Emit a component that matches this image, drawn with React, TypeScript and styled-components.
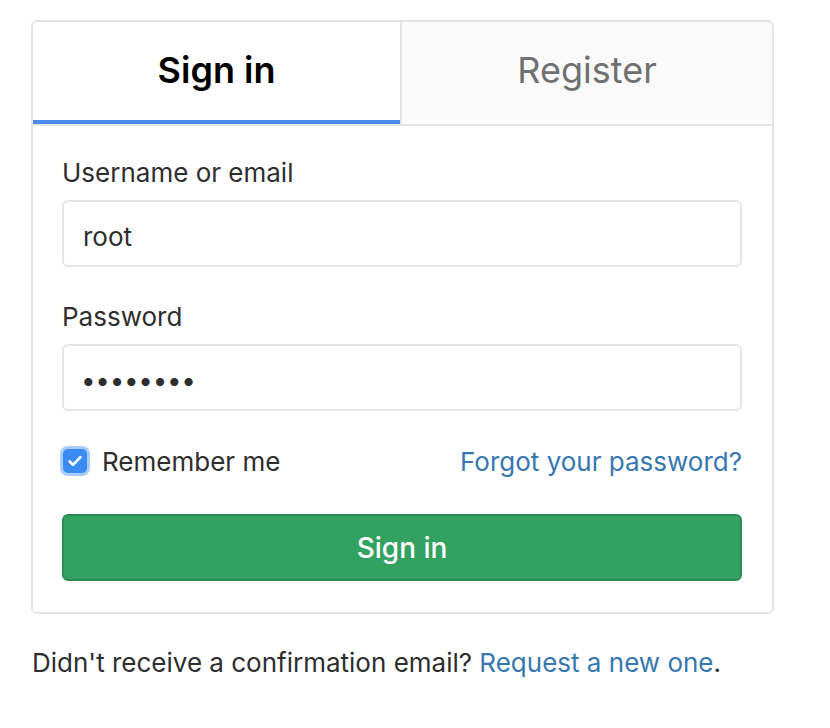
import React from "react";
import styled, { createGlobalStyle } from "styled-components";

const Global = createGlobalStyle`
  html, body { margin: 0; padding: 0; background: #fff; }
  body { font-family: Inter, "Noto Sans", "Liberation Sans", sans-serif; color: #2e2e2e; }
  * { box-sizing: border-box; }
`;

const Page = styled.div`
  padding: 20px 0 0 31px;
  width: 830px;
`;

const Card = styled.div`
  width: 743px;
  border: 2px solid #e5e5e5;
  border-radius: 6px;
  overflow: hidden;
`;

const Tabs = styled.div`
  display: flex;
  border-bottom: 2px solid #e5e5e5;
`;

const Tab = styled.div<{ $active?: boolean }>`
  flex: ${(p) => (p.$active ? "0 0 367px" : "1")};
  height: 102px;
  display: flex;
  align-items: center;
  justify-content: center;
  padding-bottom: 6px;
  font-size: 36px;
  font-weight: ${(p) => (p.$active ? 600 : 400)};
  color: ${(p) => (p.$active ? "#000" : "#707070")};
  background: ${(p) => (p.$active ? "#fff" : "#fafafa")};
  border-left: ${(p) => (p.$active ? "none" : "2px solid #e5e5e5")};
  box-shadow: ${(p) => (p.$active ? "inset 0 -4px 0 #4a8bee" : "none")};
`;

const Body = styled.div`
  padding: 30px 30px 31px 29px;
  display: flex;
  flex-direction: column;
`;

const Label = styled.label`
  font-size: 26px;
  line-height: 34px;
  margin-bottom: 10px;
  color: #2e2e2e;
`;

const Input = styled.input`
  height: 67px;
  width: 100%;
  border: 2px solid #e5e5e5;
  border-radius: 6px;
  padding: 5px 19px 0;
  font-family: inherit;
  font-size: 26px;
  color: #2e2e2e;
  outline: none;
  margin-bottom: 33px;
  background: #fff;
`;

const PasswordInput = styled(Input)`
  padding-left: 17px;
  letter-spacing: -0.3px;
`;

const CheckRow = styled.div`
  display: flex;
  align-items: center;
  justify-content: space-between;
  height: 34px;
  margin-bottom: 36px;
`;

const CheckLabel = styled.label`
  display: flex;
  align-items: center;
  gap: 15px;
  font-size: 26px;
  color: #2e2e2e;
`;

const Box = styled.span`
  width: 24px;
  height: 24px;
  border-radius: 5px;
  background: #3b8bf5;
  box-shadow: 0 0 0 3px #a8cdfb;
  display: flex;
  align-items: center;
  justify-content: center;
  margin-left: 1px;
`;

const Link = styled.a`
  color: #3777b0;
  text-decoration: none;
  font-size: 26px;
`;

const Button = styled.button`
  height: 67px;
  width: 100%;
  background: #33a162;
  border: 2px solid #2b8d52;
  border-radius: 6px;
  color: #fff;
  font-family: inherit;
  font-size: 28px;
  font-weight: 500;
`;

const Footer = styled.p`
  margin: 32px 0 0 1px;
  font-size: 26px;
  line-height: 34px;
  color: #2e2e2e;
`;

export default function App() {
  return (
    <Page>
      <Global />
      <Card>
        <Tabs>
          <Tab $active>Sign in</Tab>
          <Tab>Register</Tab>
        </Tabs>
        <Body>
          <Label>Username or email</Label>
          <Input readOnly value="root" />
          <Label>Password</Label>
          <PasswordInput readOnly type="password" value="12345678" />
          <CheckRow>
            <CheckLabel>
              <Box>
                <svg width="18" height="18" viewBox="0 0 16 16">
                  <path d="M3.2 8.4l3 3L12.8 4.6" fill="none" stroke="#fff" strokeWidth="2.4" strokeLinecap="round" strokeLinejoin="round" />
                </svg>
              </Box>
              Remember me
            </CheckLabel>
            <Link href="#">Forgot your password?</Link>
          </CheckRow>
          <Button>Sign in</Button>
        </Body>
      </Card>
      <Footer>
        Didn't receive a confirmation email? <Link href="#">Request a new one</Link>.
      </Footer>
    </Page>
  );
}
